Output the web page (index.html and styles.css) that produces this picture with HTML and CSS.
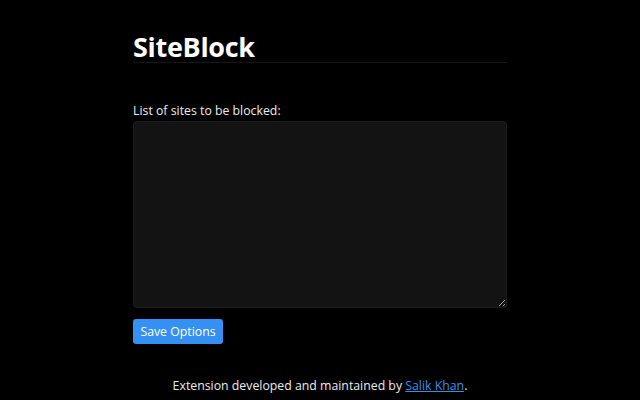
FILE: index.html
```html
<!DOCTYPE html>
<html>
<head>
<meta charset="utf-8">
<link rel="stylesheet" href="styles.css">
</head>
<body>
<div class="wrap">
  <h1 class="title">SiteBlock</h1>
  <label class="label" for="sites">List of sites to be blocked:</label>
  <textarea id="sites" class="sites"></textarea>
  <button class="save">Save Options</button>
</div>
<p class="footer">Extension developed and maintained by <a href="#" class="link">Salik Khan</a>.</p>
</body>
</html>
```
FILE: styles.css
```css
html, body {
  margin: 0;
  padding: 0;
  background: #000;
  color: #ececec;
  font-family: "Open Sans", sans-serif;
  font-size: 12.3px;
}
.wrap {
  width: 374px;
  margin: 0 auto;
  padding-top: 32px;
  display: flex;
  flex-direction: column;
  align-items: flex-start;
}
.title {
  align-self: stretch;
  margin: 0;
  font-size: 27px;
  font-weight: 700;
  color: #fff;
  line-height: 30px;
  border-bottom: 1px solid #161616;
  letter-spacing: -0.3px;
}
.label {
  margin-top: 38px;
  line-height: 20px;
}
.sites {
  align-self: stretch;
  box-sizing: border-box;
  height: 187px;
  margin: 0;
  background: #131313;
  border: 1px solid #1e1e1e;
  border-radius: 4px;
  color: #ddd;
  resize: vertical;
}
.save {
  margin-top: 11px;
  height: 25px;
  width: 90px;
  padding: 0;
  background: #3590f3;
  color: #fff;
  border: none;
  border-radius: 3px;
  font-family: inherit;
  font-size: 12.3px;
}
.footer {
  margin: 32px 0 0;
  text-align: center;
  line-height: 20px;
}
.link {
  color: #3b8ee8;
}
```
